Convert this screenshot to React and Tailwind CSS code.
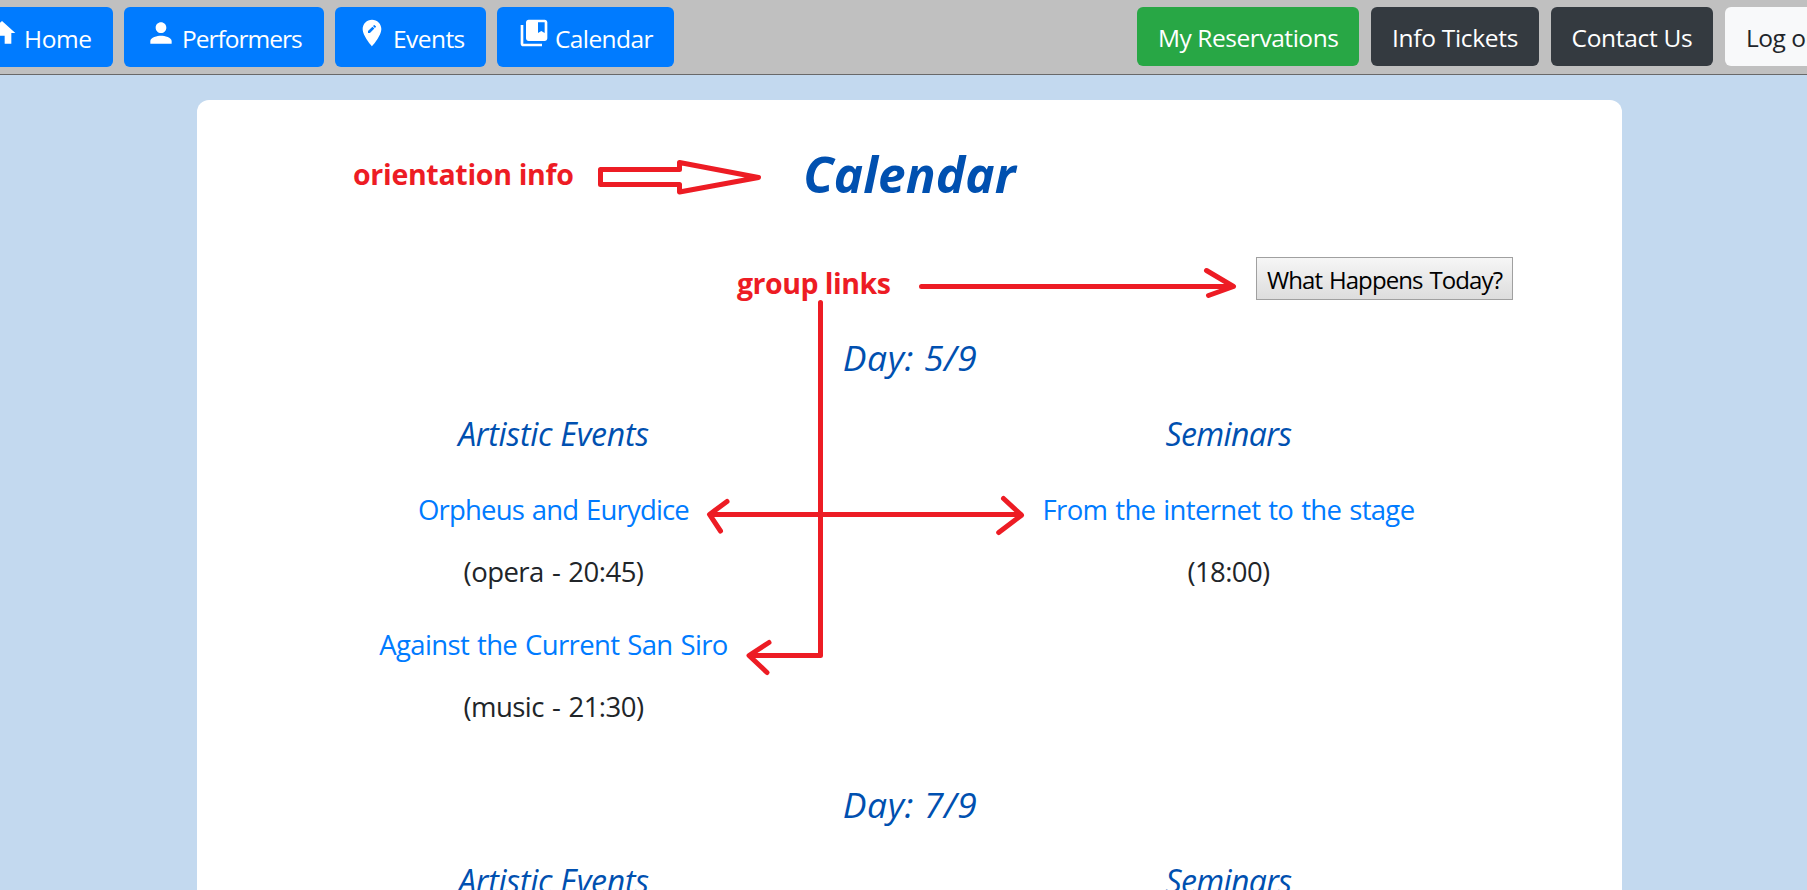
import React from "react";
import { MdHome, MdPerson, MdEditLocation, MdCollectionsBookmark } from "react-icons/md";

const font = "font-['Open_Sans',sans-serif]";

function NavButton({ icon: Icon, label, className, text }) {
  return (
    <a className={`flex h-[60px] shrink-0 items-start overflow-hidden whitespace-nowrap rounded-[6px] bg-[#007bff] pl-[21px] text-[24.5px] leading-[64px] text-white ${className}`}>
      <Icon size={32} className="mt-[10px] shrink-0" />
      <span className={text}>{label}</span>
    </a>
  );
}

function PlainButton({ label, className }) {
  return (
    <a className={`block h-[59px] shrink-0 whitespace-nowrap rounded-[6px] text-[24.5px] leading-[61px] ${className}`}>
      {label}
    </a>
  );
}

function Entry({ title, time, titleClass, timeClass }) {
  return (
    <div className="h-[135px] text-[27.5px]">
      <a className={`block h-[62px] leading-[40px] text-[#007bff] ${titleClass}`}>{title}</a>
      <p className={`leading-[40px] text-[#212529] ${timeClass}`}>{time}</p>
    </div>
  );
}

function Day({ label, artistic, seminars }) {
  return (
    <section className="h-[447px] shrink-0">
      <h2 className="h-[78px] pl-[1px] text-center text-[35.5px] italic leading-[50px] tracking-[0.6px] text-[#0050b0]">{label}</h2>
      <div className="ml-[19px] grid w-[1350px] grid-cols-2 text-center">
        <div>
          <h3 className="h-[80px] text-[32px] italic leading-[48px] tracking-[-0.25px] text-[#0050b0]">Artistic Events</h3>
          {artistic.map((e) => <Entry key={e.title} {...e} />)}
        </div>
        <div>
          <h3 className="h-[80px] text-[32px] italic leading-[48px] tracking-[-0.65px] text-[#0050b0]">Seminars</h3>
          {seminars.map((e) => <Entry key={e.title} {...e} />)}
        </div>
      </div>
    </section>
  );
}

function Annotations() {
  return (
    <div className="pointer-events-none absolute inset-0 font-bold text-[#ed1c24]">
      <span className="absolute left-[353px] top-[154px] whitespace-nowrap text-[28.5px] leading-[40px] tracking-[-0.3px]">orientation info</span>
      <span className="absolute left-[737px] top-[263px] whitespace-nowrap text-[28.5px] leading-[40px] tracking-[-0.5px]">group links</span>
      <svg className="absolute inset-0" width="1807" height="890" fill="none" stroke="#ed1c24" strokeWidth="5" strokeLinecap="round" strokeLinejoin="round">
        <path d="M600.5 169.5H679.5V162.5L758.5 177.5L679.5 192V184.5H600.5Z" />
        <path d="M921.5 286.5H1233M1206.5 270.5L1233.5 286.5L1208.5 295.5" />
        <path d="M820.5 302.5V655.5H750M769 642.5L749 655.5L767 672.5" />
        <path d="M710 514.5H1021M727 501.5L709.5 514.4L720.5 531M1003.5 498.5L1021.5 515.2L998.7 532.5" />
      </svg>
    </div>
  );
}

const dayOne = {
  label: "Day: 5/9",
  artistic: [
    { title: "Orpheus and Eurydice", time: "(opera - 20:45)", titleClass: "tracking-[-0.83px] [word-spacing:1.5px]", timeClass: "tracking-[-0.53px] [word-spacing:1.5px]" },
    { title: "Against the Current San Siro", time: "(music - 21:30)", titleClass: "tracking-[-0.66px] [word-spacing:1.5px]", timeClass: "tracking-[-0.53px] [word-spacing:1.5px]" },
  ],
  seminars: [
    { title: "From the internet to the stage", time: "(18:00)", titleClass: "tracking-[-0.68px] [word-spacing:1.5px]", timeClass: "tracking-[-0.6px]" },
  ],
};

export default function App() {
  return (
    <div className={`relative flex h-[890px] w-[1807px] flex-col overflow-hidden bg-[#c3d9ef] ${font}`}>
      <nav className="flex h-[75px] shrink-0 overflow-hidden border-b border-[#696969] bg-[#c0c0c0] pt-[7px]">
        <NavButton icon={MdHome} label="Home" className="-ml-[35px] mr-[11px] w-[148px]" text="ml-[6px] tracking-[-0.4px]" />
        <NavButton icon={MdPerson} label="Performers" className="mr-[11px] w-[200px]" text="ml-[5px] tracking-[-1px]" />
        <NavButton icon={MdEditLocation} label="Events" className="mr-[11px] w-[151px]" text="ml-[5px] tracking-[-0.55px]" />
        <NavButton icon={MdCollectionsBookmark} label="Calendar" className="mr-[463px] w-[177px]" text="ml-[5px] tracking-[-0.6px]" />
        <PlainButton label="My Reservations" className="mr-[12px] w-[222px] bg-[#28a745] pl-[21px] tracking-[-0.45px] text-white" />
        <PlainButton label="Info Tickets" className="mr-[12px] w-[168px] bg-[#343a40] pl-[21px] tracking-[-0.3px] text-white" />
        <PlainButton label="Contact Us" className="mr-[12px] w-[162px] bg-[#343a40] pl-[20.5px] tracking-[-0.3px] text-white" />
        <PlainButton label="Log out" className="w-[125px] bg-[#f8f9fa] pl-[21px] tracking-[-0.5px] text-[#212529]" />
      </nav>
      <main className="ml-[197px] mt-[25px] flex h-[1200px] w-[1425px] shrink-0 flex-col rounded-[12px] bg-white">
        <h1 className="mt-[40px] h-[117px] text-center text-[49.5px] font-bold italic leading-[69px] tracking-[0.1px] text-[#0050b0]">Calendar</h1>
        <div className="mb-[32px] flex justify-end pr-[109px]">
          <button className="flex h-[43px] w-[257px] items-center justify-center whitespace-nowrap border border-[#a0a0a0] bg-linear-to-b from-[#f6f6f6] to-[#dddddd] pt-[3px] text-[24px] tracking-[-0.9px] [word-spacing:1.5px] text-black">
            What Happens Today?
          </button>
        </div>
        <Day {...dayOne} />
        <Day label="Day: 7/9" artistic={[]} seminars={[]} />
      </main>
      <Annotations />
    </div>
  );
}
